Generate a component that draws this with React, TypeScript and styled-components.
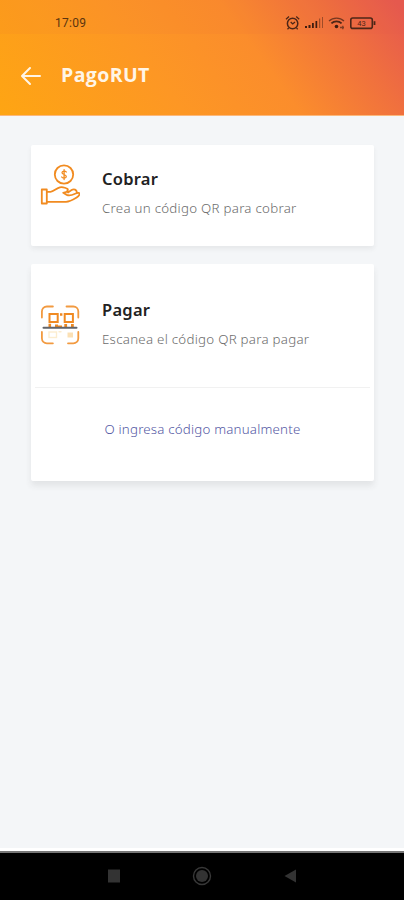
import React from "react";
import styled, { createGlobalStyle } from "styled-components";

const GlobalStyle = createGlobalStyle`
  * { box-sizing: border-box; }
  body { margin: 0; background: #f4f6f8; }
`;

const Screen = styled.div`
  display: flex;
  flex-direction: column;
  width: 404px;
  height: 900px;
  overflow: hidden;
  background: #f4f6f8;
  font-family: "Noto Sans", "Open Sans", sans-serif;
`;

const Header = styled.header`
  height: 116px;
  flex: none;
  background: linear-gradient(54deg, #fea513 0%, #fd9724 38%, #fb8d2c 62%, #f0703e 83%, #e65a4e 98%);
  border-bottom: 1px solid #fbb87c;
`;

const StatusBar = styled.div`
  display: flex;
  align-items: center;
  justify-content: space-between;
  height: 34px;
  padding: 12px 27px 0 55px;
  background: rgba(225, 75, 80, 0.05);
`;

const Clock = styled.span`
  font: 400 12px/20px Roboto, sans-serif;
  letter-spacing: 0.25px;
  color: #5b3510;
`;

const AppBar = styled.div`
  display: flex;
  align-items: center;
  height: 81px;
  padding: 0 20px 0 20px;
`;

const BackButton = styled.button`
  display: flex;
  width: 22px;
  height: 22px;
  margin: 3px 19px 0 0;
  padding: 0;
  border: 0;
  background: none;
`;

const Title = styled.h1`
  margin: 0;
  font: 700 19.5px/26px "Open Sans", sans-serif;
  letter-spacing: 0.4px;
  color: #fff5e6;
`;

const Content = styled.main`
  display: flex;
  flex: 1;
  flex-direction: column;
  gap: 18px;
  padding: 29px 30px 0 31px;
  border-bottom: 3px solid #ffffff;
`;

const Card = styled.section<{ $raised?: boolean }>`
  border-radius: 2px;
  background: #fff;
  box-shadow: ${(p) =>
    p.$raised ? "0 5px 6px rgba(60, 60, 60, 0.09)" : "0 3px 5px rgba(60, 60, 60, 0.07)"};
`;

const Option = styled.div<{ $height: number; $top: number }>`
  display: flex;
  align-items: flex-start;
  height: ${(p) => p.$height}px;
  padding: ${(p) => p.$top}px 10px 0 9px;
`;

const IconBox = styled.div<{ $drop?: number }>`
  width: 40px;
  height: 42px;
  margin: ${(p) => p.$drop ?? 0}px 22px 0 0;
  flex: none;
`;

const OptionTitle = styled.h2`
  margin: 3px 0 0;
  font: 600 16.5px/24px "Noto Sans", sans-serif;
  letter-spacing: 0.25px;
  color: #222;
`;

const OptionText = styled.p`
  margin: 6px 0 0;
  font: 300 13.3px/22px "Noto Sans", sans-serif;
  letter-spacing: 0.27px;
  color: #6c6c6c;
  white-space: nowrap;
`;

const ManualLink = styled.a`
  display: flex;
  align-items: center;
  justify-content: center;
  height: 94px;
  margin: 0 4px;
  padding-bottom: 11px;
  border-top: 1px solid #f1f1f1;
  font: 350 13.3px/20px "Noto Sans", sans-serif;
  letter-spacing: 0.2px;
  color: #5458a4;
`;

const NavBar = styled.nav`
  display: flex;
  justify-content: space-between;
  height: 49px;
  flex: none;
  padding: 12px 106px 0 106px;
  border-top: 2px solid #777;
  background: #000;
`;

const StatusIcons = () => (
  <svg width="92" height="18" viewBox="0 0 92 18" fill="none" stroke="#4d2617" strokeWidth="1.3">
    <circle cx="7.6" cy="9.5" r="5.2" strokeWidth="1.5" />
    <path d="M1 5.2 4 2.6M11.2 2.6l3 2.6M5.7 8l2 1.9 2.3-2M3.7 14l-1.2 1.2M11.5 14l1.2 1.2" />
    <g stroke="none" fill="#3f1d10">
      <path d="M20 12h2v2h-2zM23.5 11h2v3h-2zM27 9h1.8v5H27zM30.5 7h1.7v7h-1.7z" />
      <path d="M34 4.5h1.2V14H34zM37 3h1v11h-1z" opacity=".45" />
      <circle cx="51.5" cy="12.5" r="1.8" />
    </g>
    <path d="M44 7a11 11 0 0 1 15 0" opacity=".75" />
    <path d="M46.4 9.4a7.4 7.4 0 0 1 10.2 0" strokeWidth="1.8" />
    <path d="M55 13.5h4M57.8 11.8v3.5" opacity=".7" />
    <rect x="65.8" y="4" width="21.5" height="10.4" rx="2" strokeWidth="1.6" />
    <path d="M89.5 7.2v3.8" strokeWidth="1.8" />
    <text x="76.5" y="12" textAnchor="middle" fontFamily="Roboto, sans-serif" fontSize="7.5" fill="#4d2617" stroke="none">43</text>
  </svg>
);

const ArrowLeft = () => (
  <svg width="22" height="22" viewBox="0 0 22 22" fill="none" stroke="#fff5e6" strokeWidth="2" strokeLinecap="round" strokeLinejoin="round">
    <path d="M10 3 2 11l8 8M2.5 11H20" />
  </svg>
);

const HandCoin = () => (
  <svg width="40" height="42" viewBox="0 0 40 42" fill="none" stroke="#f18b20" strokeWidth="1.8" strokeLinecap="round" strokeLinejoin="round">
    <circle cx="24" cy="10.5" r="9.2" />
    <path d="M26.3 8c-.7-1.1-4.3-1.2-4.3.7 0 2.1 4.3 1.5 4.3 3.8 0 2-3.8 2-4.6.5M24.1 5.6v10" strokeWidth="1.3" />
    <path d="M1.8 25.5h5v14h-5z" />
    <path d="M6.8 27.8h3.6c3.2 0 6-3.6 9.5-4.5 3.2-.8 4.4.5 6.5 1 2.5.5 1.4 3.3-.7 3.9l-2.5.6 3.6 2.1c3.2 1.4 6.2-.2 8.8-1.4 2.2-1 4-.9 4 .5 0 1.7-1.5 2.6-3.4 3.8-4.3 2.7-6.7 4-10.2 4H6.8M28 28.5l3.6-2.4c2.4-1.6 5-.4 5.3 2.3" />
  </svg>
);

const QrScan = () => (
  <svg width="40" height="40" viewBox="0 0 40 40" fill="none" stroke="#f29a40" strokeWidth="1.8" strokeLinecap="round">
    <path d="M1.9 12.5V6.5a5 5 0 0 1 5-5h6M26.5 1.5h6.8a5 5 0 0 1 5 5v6M1.9 27v6.3a5 5 0 0 0 5 5h6M28 38.3h5.3a5 5 0 0 0 5-5V27" />
    <g stroke="#f08a22" strokeWidth="2">
      <rect x="9.5" y="9" width="8.2" height="8" />
      <rect x="24.7" y="9" width="8.2" height="8" />
    </g>
    <path d="M20 8.3h2.4v2.4H20zM8.5 18.8h2.6v3.2H8.5zM15 19.5h3v3h-3zM18 20.5h4v2h-4zM24.3 19h2.8v3h-2.8zM31 19h2.8v3H31z" fill="#ed8822" stroke="none" />
    <path d="M3.5 22.8h33" stroke="#62656b" strokeWidth="2" />
    <g stroke="#fcedcf" strokeWidth="1.4">
      <rect x="9" y="27" width="7.5" height="5.5" />
      <path d="M19 26.8h2" />
    </g>
    <path d="M27.5 27.5h5.5v5h-5.5z" fill="#fbe0b5" stroke="none" />
  </svg>
);

const SquareIcon = () => (
  <svg width="16" height="24" viewBox="0 0 16 24">
    <path d="M2 4.5h12v13H2z" fill="#333" />
  </svg>
);

const CircleIcon = () => (
  <svg width="22" height="24" viewBox="0 0 22 24">
    <circle cx="11" cy="11" r="8.5" fill="none" stroke="#383838" strokeWidth="1.4" />
    <circle cx="11" cy="11" r="6" fill="#333" />
  </svg>
);

const TriangleIcon = () => (
  <svg width="16" height="24" viewBox="0 0 16 24">
    <path d="M14 4.5v13L2.5 11z" fill="#333" />
  </svg>
);

export default function App() {
  return (
    <Screen>
      <GlobalStyle />
      <Header>
        <StatusBar>
          <Clock>17:09</Clock>
          <StatusIcons />
        </StatusBar>
        <AppBar>
          <BackButton aria-label="Volver">
            <ArrowLeft />
          </BackButton>
          <Title>PagoRUT</Title>
        </AppBar>
      </Header>
      <Content>
        <Card>
          <Option $height={101} $top={19}>
            <IconBox>
              <HandCoin />
            </IconBox>
            <div>
              <OptionTitle>Cobrar</OptionTitle>
              <OptionText>Crea un código QR para cobrar</OptionText>
            </div>
          </Option>
        </Card>
        <Card $raised>
          <Option $height={123} $top={31}>
            <IconBox $drop={10}>
              <QrScan />
            </IconBox>
            <div>
              <OptionTitle>Pagar</OptionTitle>
              <OptionText>Escanea el código QR para pagar</OptionText>
            </div>
          </Option>
          <ManualLink>O ingresa código manualmente</ManualLink>
        </Card>
      </Content>
      <NavBar>
        <SquareIcon />
        <CircleIcon />
        <TriangleIcon />
      </NavBar>
    </Screen>
  );
}
